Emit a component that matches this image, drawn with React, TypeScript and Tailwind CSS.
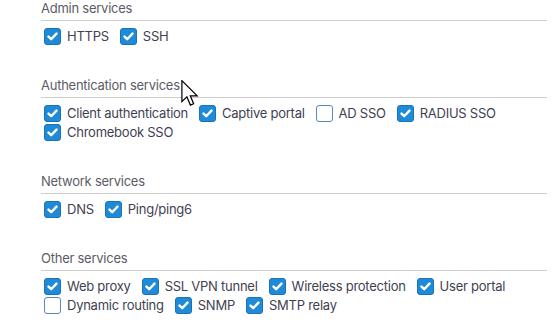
const sections: { title: string; rows: { label: string; checked: boolean }[][] }[] = [
  {
    title: "Admin services",
    rows: [
      [
        { label: "HTTPS", checked: true },
        { label: "SSH", checked: true },
      ],
    ],
  },
  {
    title: "Authentication services",
    rows: [
      [
        { label: "Client authentication", checked: true },
        { label: "Captive portal", checked: true },
        { label: "AD SSO", checked: false },
        { label: "RADIUS SSO", checked: true },
      ],
      [{ label: "Chromebook SSO", checked: true }],
    ],
  },
  {
    title: "Network services",
    rows: [
      [
        { label: "DNS", checked: true },
        { label: "Ping/ping6", checked: true },
      ],
    ],
  },
  {
    title: "Other services",
    rows: [
      [
        { label: "Web proxy", checked: true },
        { label: "SSL VPN tunnel", checked: true },
        { label: "Wireless protection", checked: true },
        { label: "User portal", checked: true },
      ],
      [
        { label: "Dynamic routing", checked: false },
        { label: "SNMP", checked: true },
        { label: "SMTP relay", checked: true },
      ],
    ],
  },
];

function Checkbox({ checked }: { checked: boolean }) {
  if (!checked) {
    return (
      <span className="h-[17px] w-[17px] shrink-0 rounded-[3px] border-[1.5px] border-[#5b86c4] bg-white" />
    );
  }
  return (
    <span className="flex h-[17px] w-[17px] shrink-0 items-center justify-center rounded-[3px] border border-[#1a72b8] bg-[#1f8ad6]">
      <svg width="11" height="9" viewBox="0 0 11 9">
        <path d="M1.5 4.6 L4.2 7.2 L9.5 1.6" fill="none" stroke="#fff" strokeWidth="2.4" strokeLinecap="round" strokeLinejoin="round" />
      </svg>
    </span>
  );
}

export default function App() {
  return (
    <div className="relative h-[335px] w-[554px] overflow-hidden bg-white pl-[41px] pr-[7px] text-[13px] tracking-[-0.25px] font-['Inter','Noto_Sans',sans-serif]">
      {sections.map((s) => (
        <div key={s.title} className="mb-[31px]">
          <div className="border-b border-[#cfcfcf] pb-[4px] leading-4 text-[#5c5c66]">{s.title}</div>
          <div className="pt-[6px]">
            {s.rows.map((row, i) => (
              <div key={i} className="flex h-[19px] items-center gap-[11px] pl-[3px]">
                {row.map((item) => (
                  <label key={item.label} className="flex items-center gap-[6px] text-[#3f3f52]">
                    <Checkbox checked={item.checked} />
                    <span>{item.label}</span>
                  </label>
                ))}
              </div>
            ))}
          </div>
        </div>
      ))}
      <svg className="absolute left-[181px] top-[80px]" width="18" height="27" viewBox="0 0 13 20">
        <path d="M0.5 0.5 L0.5 16 L4.2 12.5 L6.8 18.6 L9.2 17.6 L6.7 11.7 L11.8 11.7 Z" fill="#fff" stroke="#000" strokeWidth="0.9" strokeLinejoin="miter" />
      </svg>
    </div>
  );
}
